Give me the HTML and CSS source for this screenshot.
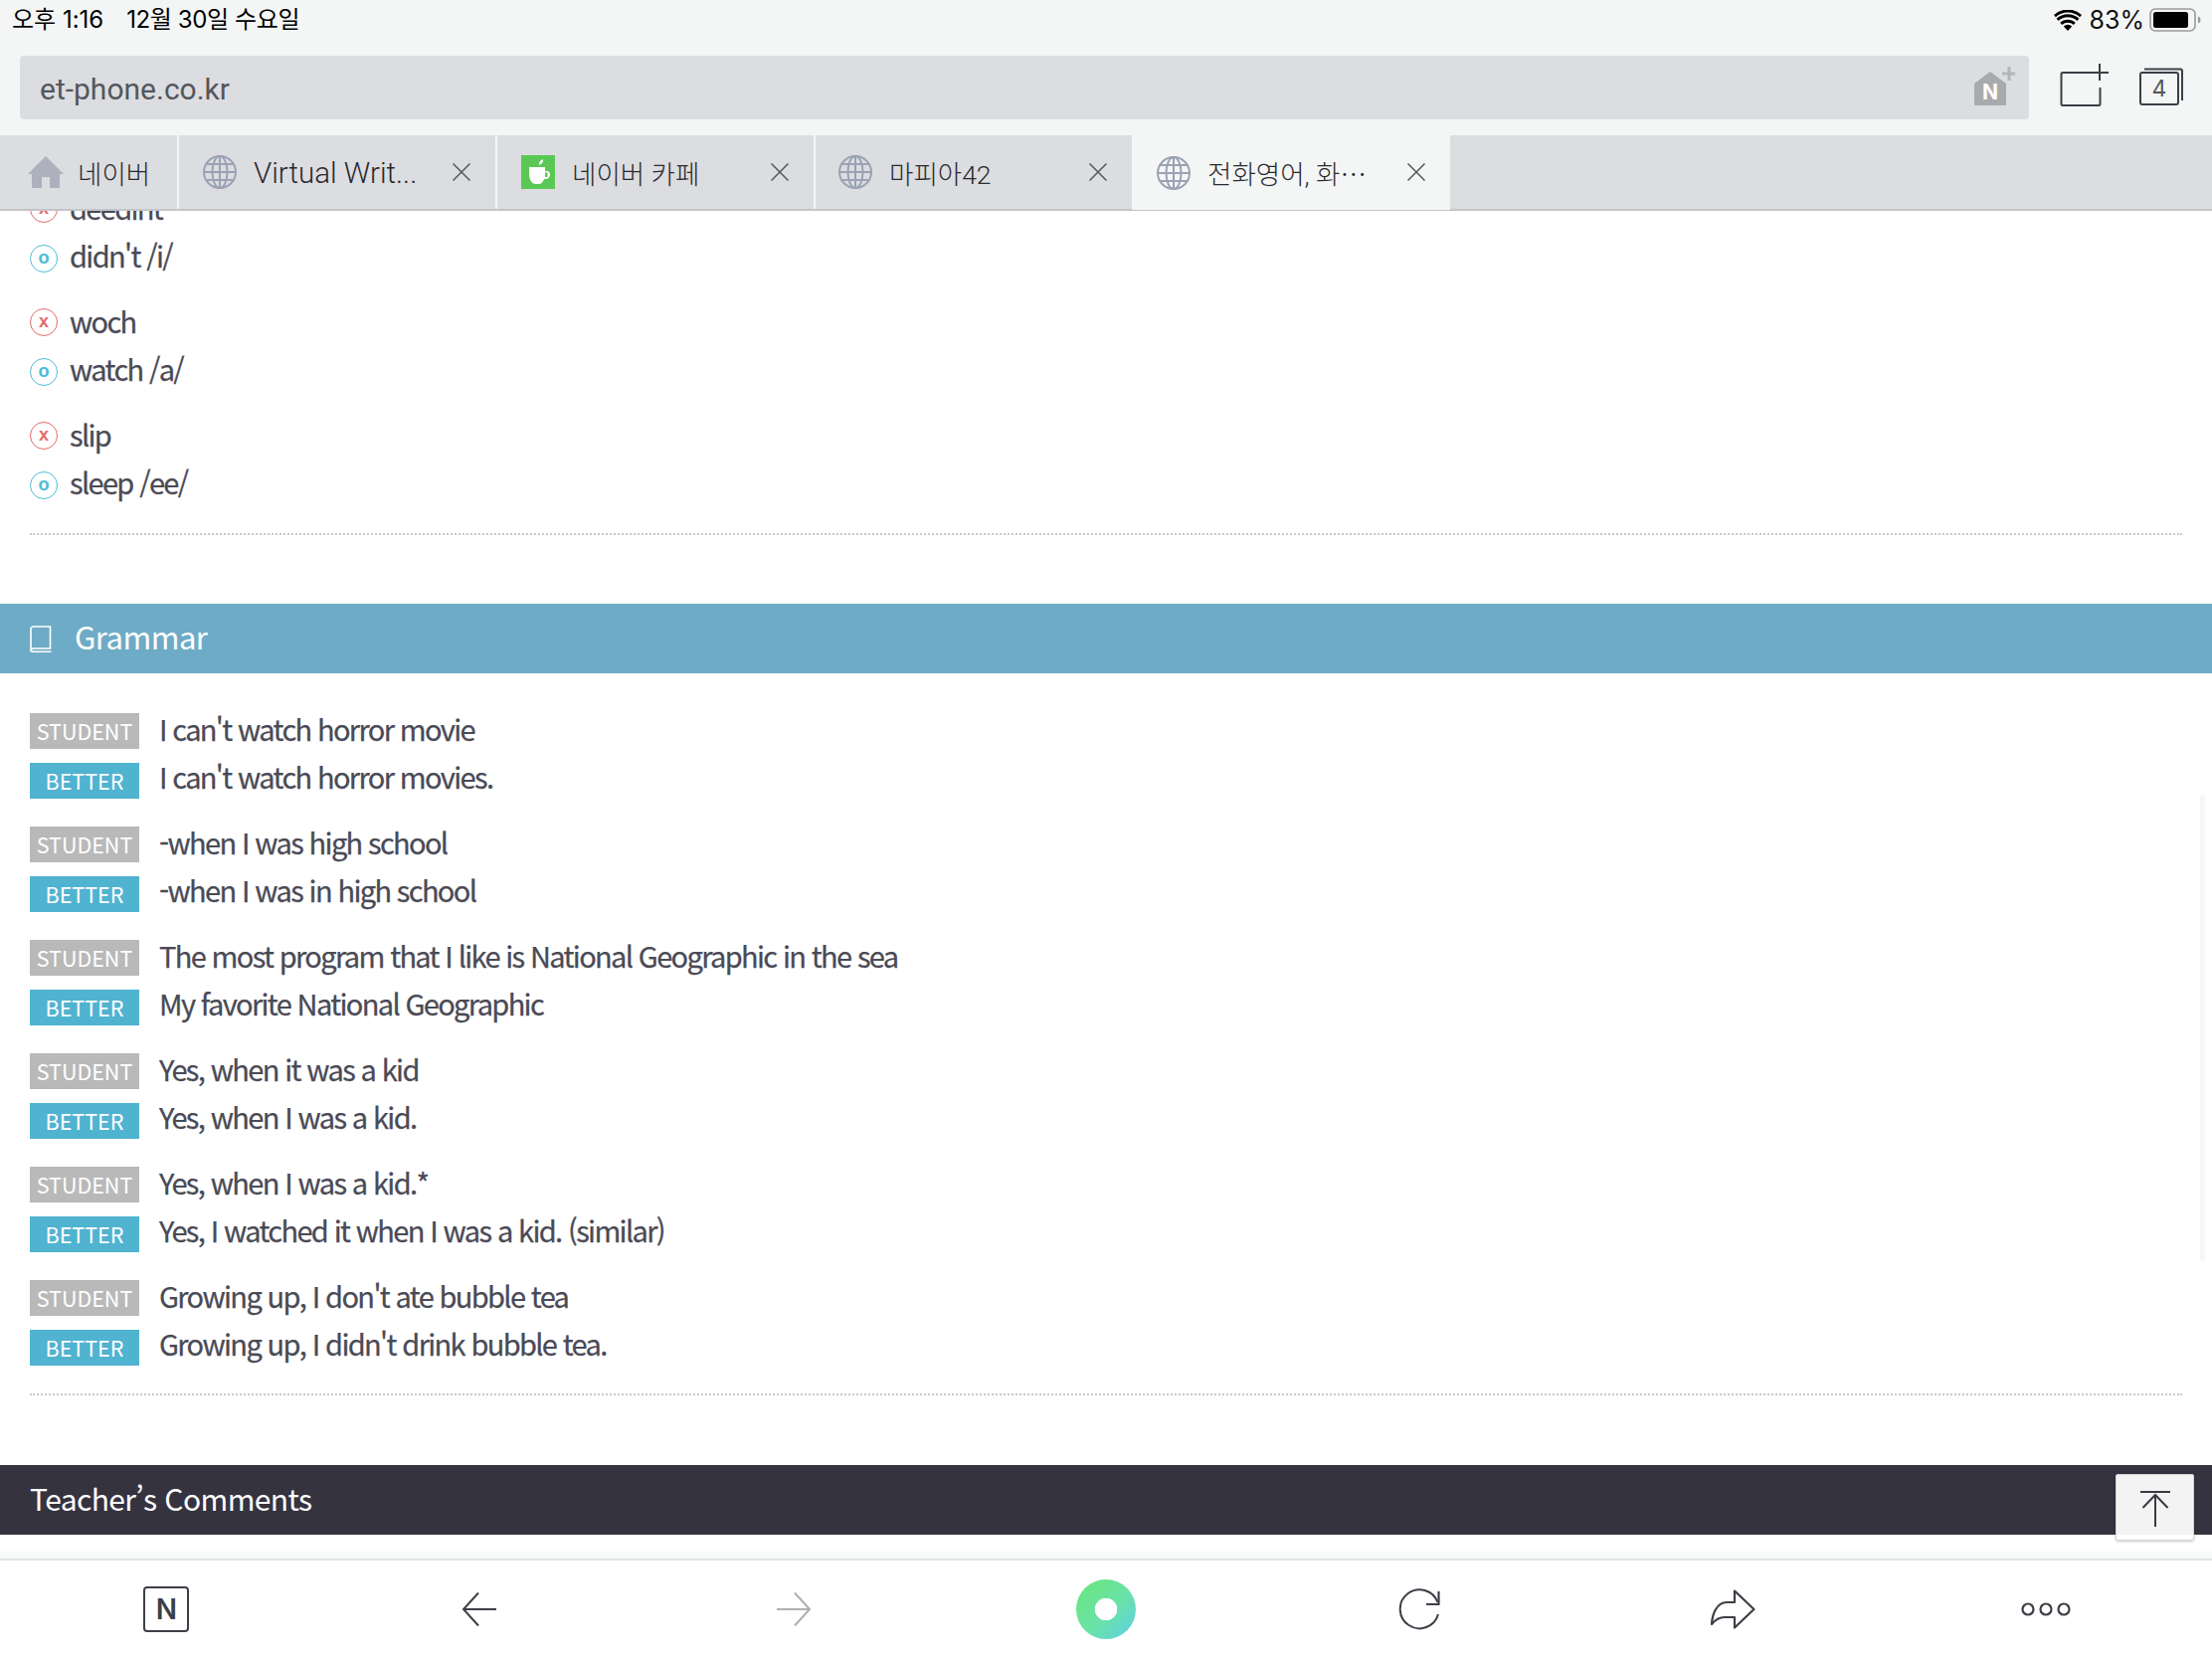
FILE: index.html
```html
<!DOCTYPE html>
<html lang="ko">
<head>
<meta charset="utf-8">
<title>et-phone.co.kr</title>
<link rel="stylesheet" href="styles.css">
</head>
<body>
<div class="app">
  <header class="status">
    <div class="status-left"><span>오후 1:16</span><span class="status-date">12월 30일 수요일</span></div>
    <div class="status-right">
      <svg class="wifi" width="28" height="21" viewBox="0 0 28 21"><path d="M14 21l-4.2-4.6a6 6 0 0 1 8.4 0z" fill="#000"/><path d="M7.2 13.4a9.8 9.8 0 0 1 13.6 0M3.6 9.4a15 15 0 0 1 20.8 0M.9 5.6a19.6 19.6 0 0 1 26.2 0" transform="translate(0 .5)" fill="none" stroke="#000" stroke-width="3"/></svg>
      <span class="pct">83%</span>
      <svg class="batt" width="52" height="24" viewBox="0 0 52 24"><rect x="1" y="1" width="45" height="22" rx="5" fill="none" stroke="#9a9a9a" stroke-width="1.6"/><rect x="4" y="4" width="35" height="16" rx="2.5" fill="#000"/><path d="M49 8.5c1.600.5 2.500 1.800 2.500 3.500s-.9 3-2.500 3.500z" fill="#9a9a9a"/></svg>
    </div>
  </header>

  <div class="addr-row">
    <div class="addr">
      <span class="url">et-phone.co.kr</span>
      <svg class="nhome" width="42" height="40" viewBox="0 0 42 40"><path d="M1 38V17L17 5l16 12v21a1 1 0 0 1-1 1H2a1 1 0 0 1-1-1z" fill="#a9aaad"/><path d="M36 0v14M29 7h13" stroke="#b4b5b9" stroke-width="3" fill="none"/><text x="17" y="33" class="nhome-n">N</text></svg>
    </div>
    <svg class="newtab" width="50" height="44" viewBox="0 0 50 44"><path d="M34 9H3a1.500 1.500 0 0 0-1.500 1.500v30A1.500 1.500 0 0 0 3 42h36a1.500 1.500 0 0 0 1.500-1.500V24" fill="none" stroke="#3c3f46" stroke-width="2"/><path d="M40 0v17M31 9h18" fill="none" stroke="#3c3f46" stroke-width="2"/></svg>
    <div class="tabs-btn">
      <svg class="tabs-back" width="46" height="38" viewBox="0 0 46 38"><path d="M5 1.500h36a2 2 0 0 1 2 2V33" fill="none" stroke="#3c3f46" stroke-width="2"/><rect x="1" y="5" width="38" height="32" rx="2" fill="none" stroke="#3c3f46" stroke-width="2"/></svg>
      <span class="tabs-count">4</span>
    </div>
  </div>

  <nav class="tabs">
    <div class="tab tab-home">
      <svg class="fav-home" width="36" height="32" viewBox="0 0 36 32"><path d="M18 0L36 18h-4v14H22V21h-8v11H4V18H0z" fill="#adb1bd"/></svg>
      <span class="tab-label tab-ko">네이버</span>
    </div>
    <div class="tab">
      <svg class="fav" width="34" height="34" viewBox="0 0 34 34"><g fill="none" stroke="#9aa2b3" stroke-width="2"><circle cx="17" cy="17" r="16"/><ellipse cx="17" cy="17" rx="7.500" ry="16"/><path d="M17 1v32M1 17h32M3.500 9h27M3.500 25h27"/></g></svg>
      <span class="tab-label tab-en">Virtual Writ...</span>
      <svg class="close" width="18" height="18" viewBox="0 0 18 18"><path d="M.5.5l17 17M17.500.5l-17 17" stroke="#55565c" stroke-width="1.500" fill="none"/></svg>
    </div>
    <div class="tab">
      <svg class="fav" width="34" height="34" viewBox="0 0 34 34"><rect width="34" height="34" fill="#5ac855"/><path d="M18 10c-.2-3 1.300-5 4-6 .4 3-1 5-4 6z" fill="#fff"/><path d="M8 12h16v4h1.500c2.500 0 3.500 1.500 3.500 3.500S27.500 24 25 24h-2c-1 3-3 5-5.500 5h-3C11 29 8 25 8 19z" fill="#fff"/><rect x="24" y="17.500" width="2.500" height="4.500" fill="#5ac855"/></svg>
      <span class="tab-label tab-ko">네이버 카페</span>
      <svg class="close" width="18" height="18" viewBox="0 0 18 18"><path d="M.5.5l17 17M17.500.5l-17 17" stroke="#55565c" stroke-width="1.500" fill="none"/></svg>
    </div>
    <div class="tab tab-nodiv">
      <svg class="fav" width="34" height="34" viewBox="0 0 34 34"><g fill="none" stroke="#9aa2b3" stroke-width="2"><circle cx="17" cy="17" r="16"/><ellipse cx="17" cy="17" rx="7.500" ry="16"/><path d="M17 1v32M1 17h32M3.500 9h27M3.500 25h27"/></g></svg>
      <span class="tab-label tab-ko">마피아42</span>
      <svg class="close" width="18" height="18" viewBox="0 0 18 18"><path d="M.5.5l17 17M17.500.5l-17 17" stroke="#55565c" stroke-width="1.500" fill="none"/></svg>
    </div>
    <div class="tab tab-active">
      <svg class="fav" width="34" height="34" viewBox="0 0 34 34"><g fill="none" stroke="#9aa2b3" stroke-width="2"><circle cx="17" cy="17" r="16"/><ellipse cx="17" cy="17" rx="7.500" ry="16"/><path d="M17 1v32M1 17h32M3.500 9h27M3.500 25h27"/></g></svg>
      <span class="tab-label tab-ko">전화영어, 화⋯</span>
      <svg class="close" width="18" height="18" viewBox="0 0 18 18"><path d="M.5.5l17 17M17.500.5l-17 17" stroke="#55565c" stroke-width="1.500" fill="none"/></svg>
    </div>
  </nav>

  <main class="viewport">
    <div class="page">
      <section class="block block-words">
        <div class="group">
          <div class="row"><span class="mark mark-x">x</span><span class="txt">deedint</span></div>
          <div class="row row-2"><span class="mark mark-o">o</span><span class="txt">didn't /i/</span></div>
        </div>
        <div class="group">
          <div class="row"><span class="mark mark-x">x</span><span class="txt">woch</span></div>
          <div class="row row-2"><span class="mark mark-o">o</span><span class="txt">watch /a/</span></div>
        </div>
        <div class="group">
          <div class="row"><span class="mark mark-x">x</span><span class="txt">slip</span></div>
          <div class="row row-2"><span class="mark mark-o">o</span><span class="txt">sleep /ee/</span></div>
        </div>
      </section>

      <h2 class="head head-grammar">
        <svg class="book" width="22" height="27" viewBox="0 0 22 27"><path d="M4 1h16.500v22H4a2.500 2.500 0 0 0-3 2.500V3.500A2.500 2.500 0 0 1 4 1zM1 25c0 .6 1 1.200 3 1.200h17.500" fill="none" stroke="#fff" stroke-width="1.600"/></svg>
        <span class="head-text">Grammar</span>
      </h2>

      <section class="block block-grammar">
        <div class="group">
          <div class="row"><span class="tag tag-s">STUDENT</span><span class="txt">I can't watch horror movie</span></div>
          <div class="row row-2"><span class="tag tag-b">BETTER</span><span class="txt">I can't watch horror movies.</span></div>
        </div>
        <div class="group">
          <div class="row"><span class="tag tag-s">STUDENT</span><span class="txt">-when I was high school</span></div>
          <div class="row row-2"><span class="tag tag-b">BETTER</span><span class="txt">-when I was in high school</span></div>
        </div>
        <div class="group">
          <div class="row"><span class="tag tag-s">STUDENT</span><span class="txt">The most program that I like is National Geographic in the sea</span></div>
          <div class="row row-2"><span class="tag tag-b">BETTER</span><span class="txt">My favorite National Geographic</span></div>
        </div>
        <div class="group">
          <div class="row"><span class="tag tag-s">STUDENT</span><span class="txt">Yes, when it was a kid</span></div>
          <div class="row row-2"><span class="tag tag-b">BETTER</span><span class="txt">Yes, when I was a kid.</span></div>
        </div>
        <div class="group">
          <div class="row"><span class="tag tag-s">STUDENT</span><span class="txt">Yes, when I was a kid.*</span></div>
          <div class="row row-2"><span class="tag tag-b">BETTER</span><span class="txt">Yes, I watched it when I was a kid. (similar)</span></div>
        </div>
        <div class="group">
          <div class="row"><span class="tag tag-s">STUDENT</span><span class="txt">Growing up, I don't ate bubble tea</span></div>
          <div class="row row-2"><span class="tag tag-b">BETTER</span><span class="txt">Growing up, I didn't drink bubble tea.</span></div>
        </div>
      </section>

      <h2 class="head head-teacher"><span class="head-text">Teacher’s Comments</span></h2>
    </div>
    <div class="scroll-thumb"></div>
    <button class="totop" aria-label="top">
      <svg width="30" height="36" viewBox="0 0 30 36"><path d="M0 1h30M15 4v32M2.500 17L15 4l12.500 13" fill="none" stroke="#3a3a42" stroke-width="2"/></svg>
    </button>
  </main>

  <footer class="toolbar">
    <div class="tool"><span class="n-box">N</span></div>
    <div class="tool"><svg width="36" height="36" viewBox="0 0 36 36"><path d="M35 18H2M17 1.500L2 18l15 16.500" fill="none" stroke="#3c3f46" stroke-width="2"/></svg></div>
    <div class="tool"><svg width="36" height="36" viewBox="0 0 36 36"><path d="M2 18h33M20 1.500L35 18 20 34.500" fill="none" stroke="#b0b0b0" stroke-width="2"/></svg></div>
    <div class="tool"><span class="orb"></span></div>
    <div class="tool"><svg width="42" height="42" viewBox="0 0 42 42"><path d="M39.500 14A19.500 19.500 0 1 0 40 26" fill="none" stroke="#3c3f46" stroke-width="2"/><path d="M40.500 3v13H28" fill="none" stroke="#3c3f46" stroke-width="2.200"/></svg></div>
    <div class="tool"><svg width="46" height="40" viewBox="0 0 46 40"><path d="M25 1.500L44.500 20 25 38.500V28H15c-5 0-9 2-13 7 .5-10 5-22 15-22h8z" fill="none" stroke="#3c3f46" stroke-width="2.200" stroke-linejoin="round"/></svg></div>
    <div class="tool"><svg width="50" height="14" viewBox="0 0 50 14"><g fill="none" stroke="#3c3f46" stroke-width="2.200"><circle cx="7" cy="7" r="5.500"/><circle cx="25" cy="7" r="5.500"/><circle cx="43" cy="7" r="5.500"/></g></svg></div>
  </footer>
</div>
</body>
</html>
```

FILE: styles.css
```css
* { box-sizing: border-box; }
html, body { margin: 0; padding: 0; }
body { width: 2224px; height: 1668px; overflow: hidden; background: #fff; font-family: "Noto Sans CJK KR", "Noto Sans", sans-serif; }
.app { width: 2224px; height: 1668px; display: flex; flex-direction: column; }

.status { height: 56px; background: #f4f6f6; display: flex; justify-content: space-between; align-items: flex-start; padding: 0 11px 0 12px; font-family: Inter, "Noto Sans CJK KR", sans-serif; color: #000; }
.status-left { display: flex; gap: 23px; font-size: 24px; line-height: 40px; }
.status-date { letter-spacing: -0.400px; }
.status-right { display: flex; align-items: center; height: 40px; }
.wifi { margin-right: 8px; }
.pct { font-size: 25px; line-height: 40px; margin-right: 5px; color: #111; }

.addr-row { height: 80px; background: #f4f6f6; display: flex; align-items: flex-start; padding-left: 20px; }
.addr { width: 2020px; height: 64px; background: #dcdde1; border-radius: 4px; display: flex; align-items: center; justify-content: space-between; padding: 0 14px 0 20px; }
.url { font-family: Roboto, sans-serif; font-size: 30px; color: #55565c; padding-top: 2px; }
.nhome { margin-top: -3px; }
.nhome-n { font-family: Inter, sans-serif; font-weight: 700; font-size: 21px; fill: #fff; text-anchor: middle; }
.newtab { margin: 8px 0 0 31px; }
.tabs-btn { position: relative; width: 46px; height: 38px; margin: 12px 0 0 30px; }
.tabs-back { display: block; }
.tabs-count { position: absolute; left: 1px; top: 5px; width: 38px; height: 32px; display: flex; align-items: center; justify-content: center; font-family: Inter, sans-serif; font-size: 23px; color: #55565c; }

.tabs { height: 76px; background: #dcdde1; border-bottom: 2px solid #c4c5c9; display: flex; }
.tab { width: 320px; height: 74px; display: flex; align-items: center; padding-left: 24px; border-right: 2px solid #f4f6f6; position: relative; flex: none; }
.tab-home { width: 180px; padding-left: 28px; }
.tab-nodiv { width: 318px; border-right: 0; padding-left: 23px; }
.tab-nodiv .fav { margin-right: 17px; }
.tab-active { background: #f4f6f6; border-right: 0; margin-bottom: -1px; height: 75px; padding-left: 25px; }
.fav { flex: none; margin-right: 17px; }
.fav-home { flex: none; margin-right: 14px; }
.tab-label { font-family: Roboto, "Noto Sans CJK KR", sans-serif; color: #2a2a2e; white-space: nowrap; font-weight: 300; }
.tab-ko { font-size: 26.500px; }
.tab-en { font-size: 29.500px; padding-top: 2px; }
.close { position: absolute; left: 275px; top: 28px; }
.tab-active .close { left: 277px; }

.viewport { flex: 1; position: relative; overflow: hidden; background: #fff; }
.page { margin-top: -26px; }
.block { margin: 0 30px 0 30px; border-bottom: 2px dotted #c9c9c9; padding-bottom: 8px; }
.block-grammar { padding-top: 34px; padding-bottom: 6px; }
.group { margin-bottom: 18px; }
.row { display: flex; align-items: flex-start; height: 48px; }
.txt { font-size: 29px; line-height: 43px; color: #4a4a56; letter-spacing: -1.650px; -webkit-text-stroke: 0.250px #4a4a56; white-space: nowrap; }
.block-words .txt { line-height: 45px; }
.mark { flex: none; width: 28px; height: 28px; margin: 10px 12px 0 0; border-radius: 50%; display: flex; align-items: center; justify-content: center; font-family: "Liberation Sans", sans-serif; font-weight: 700; font-size: 18px; line-height: 1; padding-bottom: 2px; border: 1.500px solid; }
.row-2 .mark { margin-top: 12px; }
.mark-x { color: #e56a6a; border-color: #e56a6a; }
.mark-o { color: #4fbcd8; border-color: #4fbcd8; }
.tag { flex: none; width: 110px; height: 36px; margin: 6px 20px 0 0; padding-bottom: 2px; display: flex; align-items: center; justify-content: center; color: #fff; font-size: 21.500px; font-family: "Noto Sans CJK KR", sans-serif; }
.row-2 .tag { margin-top: 8px; }
.tag-s { background: #b9b9b9; }
.tag-b { background: #50b3d0; }

.head { margin: 0; height: 70px; display: flex; align-items: center; color: #fff; font-weight: 400; }
.head-text { padding-bottom: 5px; }
.head-grammar { background: #6eabc6; margin-top: 69px; padding-left: 30px; font-size: 31px; letter-spacing: -0.500px; }
.book { margin-right: 23px; }
.head-teacher { background: #35333f; margin-top: 70px; padding-left: 30px; font-size: 30px; letter-spacing: -0.600px; }

.scroll-thumb { position: absolute; left: 2212px; top: 587px; width: 5px; height: 469px; border-radius: 3px; background: #f6f6f6; }
.totop { position: absolute; left: 2127px; top: 1270px; width: 79px; height: 67px; padding: 16px 0 0; margin: 0; border: 1px solid #d4d4d4; border-radius: 2px; background: rgba(255,255,255,.94); box-shadow: 0 1px 3px rgba(0,0,0,.2); display: flex; justify-content: center; align-items: flex-start; z-index: 2; }

.viewport::after { content: ""; position: absolute; left: 0; right: 0; bottom: 0; height: 10px; background: linear-gradient(#fdfefe, #f5f7f6); }

.toolbar { height: 101px; border-top: 2px solid #e2e5e6; background: #fff; display: grid; grid-template-columns: repeat(7, 1fr); padding: 0 10px 2px; align-items: center; }
.tool { display: flex; align-items: center; justify-content: center; }
.n-box { width: 46px; height: 46px; border: 2.500px solid #3c3f46; border-radius: 4px; display: flex; align-items: center; justify-content: center; font-family: Inter, sans-serif; font-weight: 600; font-size: 28px; color: #3c3f46; }
.orb { width: 60px; height: 60px; border-radius: 50%; background: radial-gradient(circle at center, #fff 0 11px, transparent 11.500px), linear-gradient(135deg, #69e67a, #6be2a8 55%, #5ccfe6); }
```
